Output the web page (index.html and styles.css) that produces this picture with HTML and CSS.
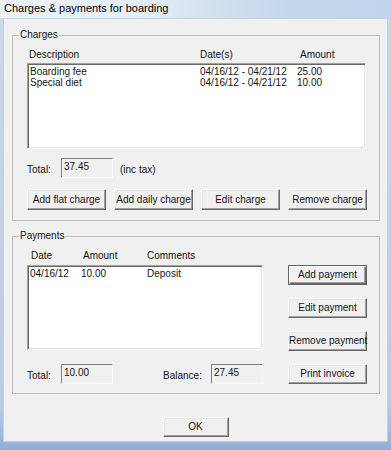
FILE: index.html
```html
<!DOCTYPE html>
<html>
<head>
<meta charset="utf-8">
<link rel="stylesheet" href="styles.css">
</head>
<body>
<div class="window">
  <div class="titlebar"><span class="title">Charges &amp; payments for boarding</span></div>
  <div class="frame">
    <div class="client">
      <fieldset class="group charges">
        <legend>Charges</legend>
        <div class="group-body charges-body">
          <div class="cols charge-head"><span>Description</span><span>Date(s)</span><span>Amount</span></div>
          <div class="listbox charge-list">
            <div class="cols charge-row"><span>Boarding fee</span><span>04/16/12 - 04/21/12</span><span>25.00</span></div>
            <div class="cols charge-row"><span>Special diet</span><span>04/16/12 - 04/21/12</span><span>10.00</span></div>
          </div>
          <div class="field-row charge-total">
            <span class="label">Total:</span>
            <div class="field">37.45</div>
            <span class="label note">(inc tax)</span>
          </div>
          <div class="button-row">
            <button class="btn">Add flat charge</button>
            <button class="btn">Add daily charge</button>
            <button class="btn">Edit charge</button>
            <button class="btn">Remove charge</button>
          </div>
        </div>
      </fieldset>
      <fieldset class="group payments">
        <legend>Payments</legend>
        <div class="group-body pay-body">
          <div class="pay-left">
            <div class="cols pay-head"><span>Date</span><span>Amount</span><span>Comments</span></div>
            <div class="listbox pay-list">
              <div class="cols pay-row"><span>04/16/12</span><span>10.00</span><span>Deposit</span></div>
            </div>
            <div class="field-row pay-totals">
              <span class="label">Total:</span>
              <div class="field">10.00</div>
              <span class="label balance-label">Balance:</span>
              <div class="field">27.45</div>
            </div>
          </div>
          <div class="pay-buttons">
            <button class="btn btn-side btn-default">Add payment</button>
            <button class="btn btn-side">Edit payment</button>
            <button class="btn btn-side">Remove payment</button>
            <button class="btn btn-side">Print invoice</button>
          </div>
        </div>
      </fieldset>
      <div class="ok-row"><button class="btn btn-ok">OK</button></div>
    </div>
  </div>
</div>
</body>
</html>
```

FILE: styles.css
```css
html, body {
  margin: 0;
  padding: 0;
}
body {
  background: #f0f0f0;
  font-family: "Liberation Sans", Arial, sans-serif;
  font-size: 10px;
  line-height: 12px;
  color: #151515;
}
.window {
  width: 391px;
  height: 450px;
  display: flex;
  flex-direction: column;
  overflow: hidden;
}
.titlebar {
  height: 18px;
  flex: none;
  box-sizing: border-box;
  padding-left: 4px;
  font-size: 11px;
  line-height: 17px;
  color: #000;
  background: linear-gradient(90deg, #edf2f7 0%, #e6eef6 35%, #d2e1ef 55%, #c2d7ec 75%, #bfd5eb 100%);
}
.frame {
  flex: 1;
  display: flex;
  padding: 0 3px 8px 3px;
  background: linear-gradient(180deg, #c9d8e8 0%, #b9cde3 90%, #8eaed6 100%);
}
.client {
  flex: 1;
  background: #f0f0f0;
  box-shadow: inset 0 0 0 1px #c8d0da;
}
.group {
  margin: 0 0 0 9px;
  width: 368px;
  box-sizing: border-box;
  border: 1px solid #bdbdbd;
  padding: 0;
  min-width: 0;
}
.group legend {
  margin-left: 6px;
  padding: 0 1px;
  font-size: 10px;
  line-height: 12px;
}
.charges {
  margin-top: 11px;
}
.payments {
  margin-top: 9px;
}
.group-body {
  padding: 8px 0 9px 14px;
}
.charges-body {
  padding-bottom: 10px;
}
.cols {
  display: grid;
}
.charge-head {
  grid-template-columns: 171px 100px auto;
  padding-left: 2px;
  height: 12px;
}
.listbox {
  box-sizing: border-box;
  background: #fff;
  border: 1px solid;
  border-color: #a0a0a0 #ffffff #ffffff #a0a0a0;
  box-shadow: inset 1px 1px 0 #696969, inset -1px -1px 0 #e3e3e3;
  padding: 2px 1px 1px 1px;
}
.charge-list {
  margin-top: 2px;
  width: 339px;
  height: 86px;
}
.charge-row {
  grid-template-columns: 170px 97px auto;
  padding-left: 1px;
  line-height: 11px;
}
.field-row {
  display: flex;
  align-items: flex-start;
  height: 20px;
}
.charge-total {
  margin-top: 9px;
}
.label {
  width: 34px;
  padding-top: 6px;
  white-space: nowrap;
}
.note {
  width: auto;
  margin-left: 7px;
}
.field {
  width: 52px;
  height: 20px;
  box-sizing: border-box;
  border: 1px solid;
  border-color: #808080 #ffffff #ffffff #808080;
  padding: 2px 2px;
  background: #f0f0f0;
}
.button-row {
  display: flex;
  gap: 8px;
  margin-top: 11px;
}
.btn {
  width: 79px;
  height: 21px;
  box-sizing: border-box;
  margin: 0;
  padding: 0;
  font-family: "Liberation Sans", Arial, sans-serif;
  font-size: 10px;
  line-height: 12px;
  color: #151515;
  background: #f0f0f0;
  border: 1px solid;
  border-color: #ffffff #696969 #696969 #ffffff;
  box-shadow: inset -1px -1px 0 #a0a0a0, inset 1px 1px 0 #e3e3e3;
  border-radius: 0;
  white-space: nowrap;
}
.pay-body {
  display: flex;
}
.pay-left {
  width: 236px;
}
.pay-head {
  grid-template-columns: 52px 64px auto;
  padding-left: 4px;
  height: 12px;
}
.pay-list {
  margin-top: 3px;
  width: 236px;
  height: 85px;
}
.pay-row {
  grid-template-columns: 51px 66px auto;
  padding-left: 1px;
  line-height: 11px;
}
.pay-totals {
  margin-top: 14px;
}
.balance-label {
  margin-left: 50px;
  width: 48px;
}
.pay-buttons {
  margin-left: 25px;
  margin-top: 15px;
  display: flex;
  flex-direction: column;
  gap: 13px;
}
.btn-side {
  height: 20px;
}
.btn-default {
  border-color: #646464;
  box-shadow: inset 1px 1px 0 #ffffff, inset -1px -1px 0 #696969, inset -2px -2px 0 #a0a0a0;
}
.ok-row {
  display: flex;
  justify-content: center;
  margin-top: 23px;
}
.btn-ok {
  width: 66px;
  height: 20px;
}
```
